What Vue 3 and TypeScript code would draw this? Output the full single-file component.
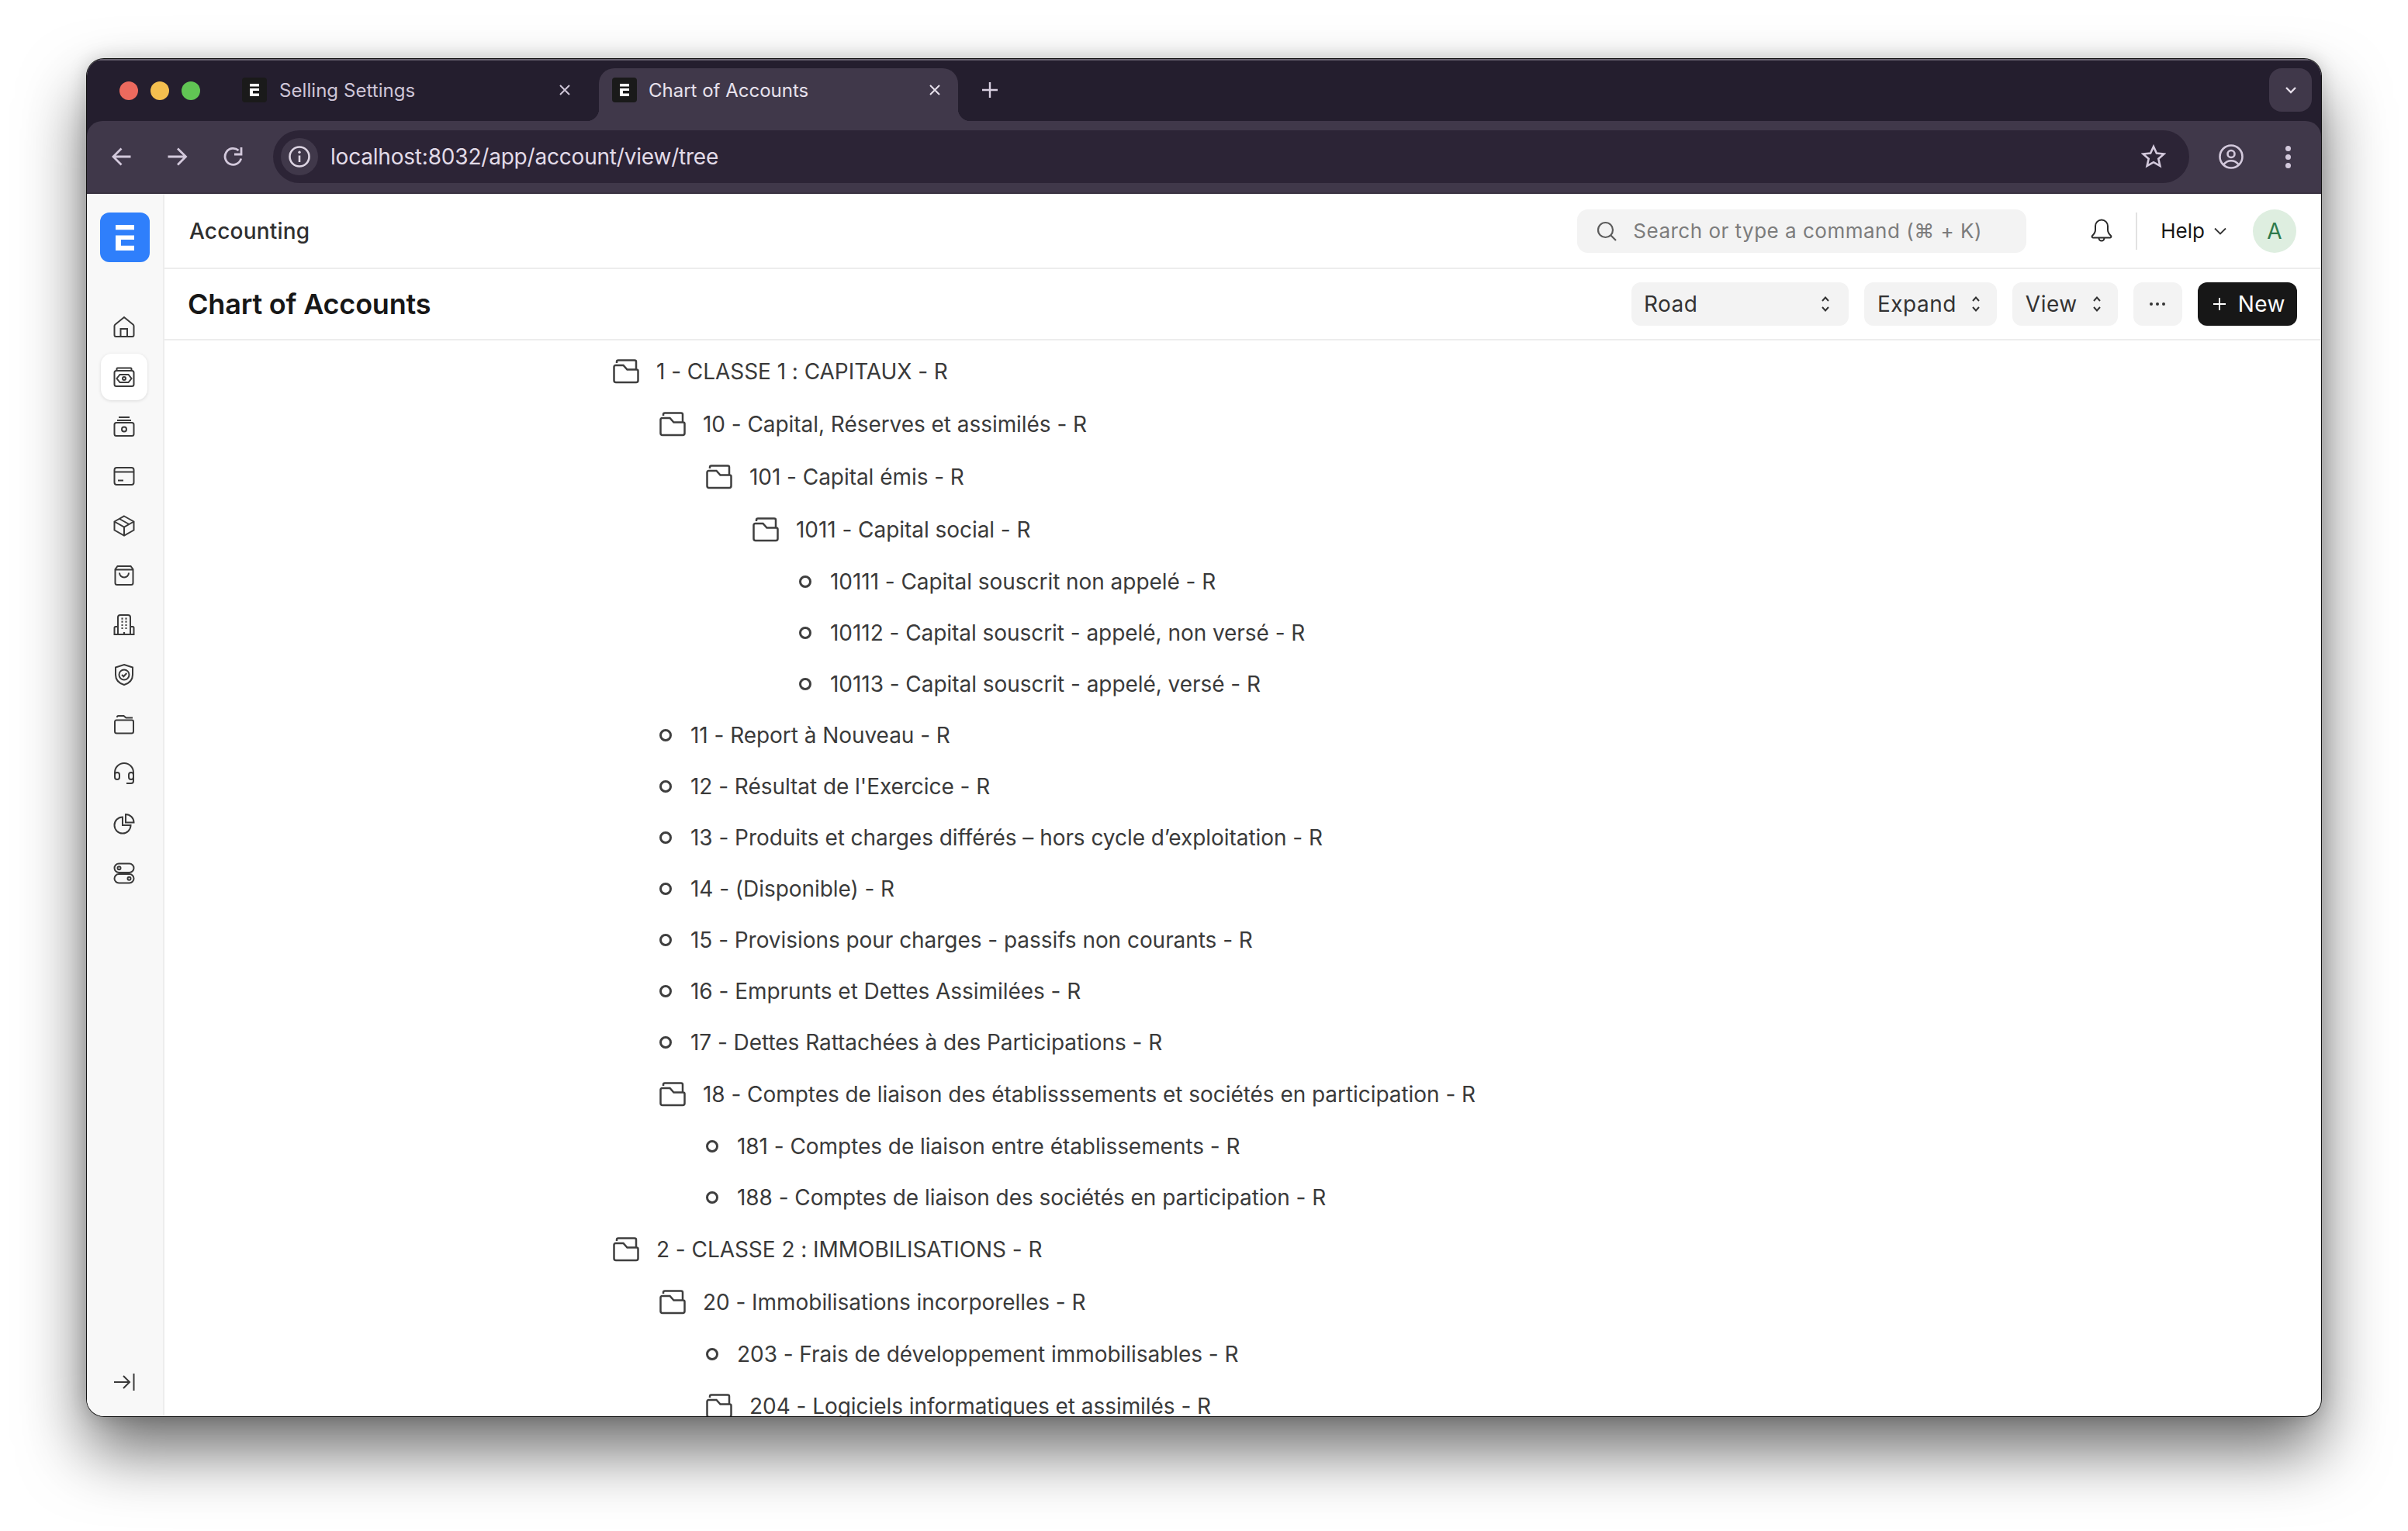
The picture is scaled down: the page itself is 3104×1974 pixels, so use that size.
<script setup lang="ts">
interface Node { level: number; folder: boolean; label: string }
const rows: [number, boolean, string][] = [
  [0, true, '1 - CLASSE 1 : CAPITAUX - R'],
  [1, true, '10 - Capital, Réserves et assimilés - R'],
  [2, true, '101 - Capital émis - R'],
  [3, true, '1011 - Capital social - R'],
  [4, false, '10111 - Capital souscrit non appelé - R'],
  [4, false, '10112 - Capital souscrit - appelé, non versé - R'],
  [4, false, '10113 - Capital souscrit - appelé, versé - R'],
  [1, false, '11 - Report à Nouveau - R'],
  [1, false, "12 - Résultat de l'Exercice - R"],
  [1, false, '13 - Produits et charges différés – hors cycle d’exploitation - R'],
  [1, false, '14 - (Disponible) - R'],
  [1, false, '15 - Provisions pour charges - passifs non courants - R'],
  [1, false, '16 - Emprunts et Dettes Assimilées - R'],
  [1, false, '17 - Dettes Rattachées à des Participations - R'],
  [1, true, '18 - Comptes de liaison des établisssements et sociétés en participation - R'],
  [2, false, '181 - Comptes de liaison entre établissements - R'],
  [2, false, '188 - Comptes de liaison des sociétés en participation - R'],
  [0, true, '2 - CLASSE 2 : IMMOBILISATIONS - R'],
  [1, true, '20 - Immobilisations incorporelles - R'],
  [2, false, '203 - Frais de développement immobilisables - R'],
  [2, true, '204 - Logiciels informatiques et assimilés - R'],
]
const tree: Node[] = rows.map(([level, folder, label]) => ({ level, folder, label }))
const indent = (n: Node) => ({ paddingLeft: `${n.level * 60}px` })
</script>

<template>
  <div class="desk">
    <div class="window">
      <div class="tabstrip">
        <div class="lights"><i class="red"></i><i class="yellow"></i><i class="green"></i></div>
        <div class="tab">
          <span class="favicon"><svg viewBox="0 0 12 16" width="12" height="16"><path d="M0 0h12v3.6H0zM0 6h12v3H4v3.4h8V16H0z" fill="#fff"/></svg></span>
          <span class="tab-title">Selling Settings</span>
          <svg class="tab-x" viewBox="0 0 16 16" width="16" height="16"><path d="M2 2l12 12M14 2L2 14" stroke="currentColor" stroke-width="2" fill="none"/></svg>
        </div>
        <div class="tab active">
          <span class="favicon"><svg viewBox="0 0 12 16" width="12" height="16"><path d="M0 0h12v3.6H0zM0 6h12v3H4v3.4h8V16H0z" fill="#fff"/></svg></span>
          <span class="tab-title">Chart of Accounts</span>
          <svg class="tab-x" viewBox="0 0 16 16" width="16" height="16"><path d="M2 2l12 12M14 2L2 14" stroke="currentColor" stroke-width="2" fill="none"/></svg>
        </div>
        <svg class="tab-plus" viewBox="0 0 22 22" width="22" height="22"><path d="M11 1v20M1 11h20" stroke="#d8cfe0" stroke-width="2.4" fill="none"/></svg>
        <div class="tab-menu"><svg viewBox="0 0 16 10" width="16" height="10"><path d="M2 2l6 6 6-6" stroke="#e6dfea" stroke-width="2.4" fill="none"/></svg></div>
      </div>

      <div class="toolbar">
        <svg class="tb-ico" viewBox="0 0 32 32"><path d="M24.500 16H3M12.500 5.500L2 16l10.500 10.500" /></svg>
        <svg class="tb-ico" viewBox="0 0 32 32"><path d="M0.500 16H22M13 5.500L23.500 16 13 26.500" /></svg>
        <svg class="tb-ico reload" viewBox="0 0 32 32"><path d="M22.700 18.500A10.500 10.500 0 1 1 19.500 8" /><path d="M23 4v9h-9" /></svg>
        <div class="address">
          <span class="info"><svg viewBox="0 0 32 32" width="32" height="32"><circle cx="16" cy="16" r="12.500" fill="none" stroke="#ddd5e3" stroke-width="2.600"/><path d="M16 14.500V23" stroke="#ddd5e3" stroke-width="2.600" fill="none"/><circle cx="16" cy="10.200" r="1.700" fill="#ddd5e3"/></svg></span>
          <span class="url">localhost:8032/app/account/view/tree</span>
          <svg class="tb-ico star" viewBox="0 0 32 32"><path d="M16 3l3.900 8.500 9.600 1-7.200 6.300 2.100 9.200L16 23.200 7.600 28l2.100-9.200-7.200-6.300 9.600-1z" /></svg>
        </div>
        <svg class="tb-ico profile" viewBox="0 0 32 32"><circle cx="16" cy="16" r="14.500" /><circle cx="16" cy="12.500" r="4.500" /><path d="M6.500 26c2.500-3.200 5.800-4.800 9.500-4.800s7 1.600 9.500 4.800" /></svg>
        <span class="kebab"><i></i><i></i><i></i></span>
      </div>

      <div class="app">
        <aside class="sidebar">
          <div class="logo"><svg viewBox="0 0 12 16" width="24" height="33" preserveAspectRatio="none"><path d="M0 0h12v3H0zM0 6.500h12v2.700H3.500v3.800H12v3H0z" fill="#fff"/></svg></div>
          <nav class="side-nav">
            <a class="side-item"><svg viewBox="0 0 32 32"><path d="M3.500 14.500a2.500 2.500 0 0 1 .9-1.900L16 3l11.600 9.600a2.500 2.500 0 0 1 .9 1.900V26a2 2 0 0 1-2 2h-21a2 2 0 0 1-2-2zM11.500 28V18h8.500v10"/></svg></a>
            <a class="side-item current"><svg viewBox="0 0 32 32"><path d="M6.500 8V5.500a1 1 0 0 1 1-1h17a1 1 0 0 1 1 1V8"/><rect x="3.500" y="8" width="25" height="20" rx="2.500"/><path d="M6.500 18l4-5h11l4 5-4 5h-11z"/><circle cx="16" cy="18" r="2"/></svg></a>
            <a class="side-item"><svg viewBox="0 0 32 32"><path d="M9 4h14M7 8h18"/><rect x="3.500" y="11" width="25" height="17" rx="2.500"/><circle cx="16" cy="19.500" r="3"/></svg></a>
            <a class="side-item"><svg viewBox="0 0 32 32"><rect x="3.500" y="5" width="25" height="22" rx="3"/><path d="M3.500 10.500h25M8 21.500h7"/></svg></a>
            <a class="side-item"><svg viewBox="0 0 32 32"><path d="M16 3.500l12.500 7v11L16 28.500l-12.500-7v-11zM3.500 10.500L16 17.500l12.500-7M16 17.500v11M10 7l12.500 7"/></svg></a>
            <a class="side-item"><svg viewBox="0 0 32 32"><path d="M7.500 4h17l3 4v17.500a2.500 2.500 0 0 1-2.500 2.500H7a2.500 2.500 0 0 1-2.500-2.500V8zM4.500 8.500h23M10 12.500a6 6 0 0 0 12 0"/></svg></a>
            <a class="side-item"><svg viewBox="0 0 32 32"><path d="M8 28V6a3 3 0 0 1 3-3h10a3 3 0 0 1 3 3v22M8 18H5a1.500 1.500 0 0 0-1.500 1.500V28h25v-8.500A1.500 1.500 0 0 0 27 18h-3"/><path class="dots" d="M12.500 7.700h2M17.500 7.700h2M12.500 11.700h2M17.500 11.700h2M12.500 16h2M17.500 16h2M12.500 20h2M17.500 20h2M16 25v3"/></svg></a>
            <a class="side-item"><svg viewBox="0 0 32 32"><path d="M16 3l11 3.500V16c0 6.500-4.500 11-11 13C9.500 27 5 22.500 5 16V6.500z"/><circle cx="16" cy="16" r="6.500"/><path d="M13 16l2.300 2.300 4-4.300"/></svg></a>
            <a class="side-item"><svg viewBox="0 0 32 32"><path d="M7 7V6.500A1.500 1.500 0 0 1 8.500 5h7l3 2.500H27"/><path d="M4 12.500a2 2 0 0 1 2-2h20a2 2 0 0 1 2 2V25a2.500 2.500 0 0 1-2.500 2.500h-19A2.500 2.500 0 0 1 4 25z"/></svg></a>
            <a class="side-item"><svg viewBox="0 0 32 32"><path d="M4 17v-3a12 12 0 0 1 24 0v3"/><path d="M4 17a3 3 0 0 1 6 0v3a3 3 0 0 1-6 0zM22 17a3 3 0 0 1 6 0v3a3 3 0 0 1-6 0z"/><path d="M28 20v5a3 3 0 0 1-3 3h-6"/></svg></a>
            <a class="side-item"><svg viewBox="0 0 32 32"><path d="M18 4a10.500 10.500 0 0 1 10.500 10.500H18z"/><path d="M14 7.500a10.500 10.500 0 1 0 10.500 10.500H14z"/></svg></a>
            <a class="side-item"><svg viewBox="0 0 32 32"><rect x="3.500" y="3.500" width="25" height="11.500" rx="5.700"/><rect x="3.500" y="17" width="25" height="11.500" rx="5.700"/><circle cx="9.500" cy="9.200" r="2"/><circle cx="22.500" cy="22.800" r="2"/></svg></a>
          </nav>
          <a class="side-collapse"><svg viewBox="0 0 32 32"><path d="M3 16h19M15 8l8 8-8 8M28.500 5v22"/></svg></a>
        </aside>

        <main class="main">
          <header class="navbar">
            <span class="crumb">Accounting</span>
            <div class="nav-right">
              <div class="search">
                <svg viewBox="0 0 28 28" width="28" height="28"><circle cx="12.500" cy="12.500" r="9.500" fill="none" stroke="#5c5c5c" stroke-width="2.200"/><path d="M19.500 19.500L26 26" stroke="#5c5c5c" stroke-width="2.200" fill="none"/></svg>
                <span>Search or type a command (⌘ + K)</span>
              </div>
              <svg class="bell" viewBox="0 0 28 32" width="28" height="32"><path d="M14 1.500a8 8 0 0 0-8 8v5c0 3-2 5.500-4 7.500a1.500 1.500 0 0 0 1 2.500h22a1.500 1.500 0 0 0 1-2.500c-2-2-4-4.500-4-7.500v-5a8 8 0 0 0-8-8zM10.500 25a3.500 3.500 0 0 0 7 0" fill="none" stroke="#2a2a2a" stroke-width="2"/></svg>
              <span class="vline"></span>
              <span class="help">Help<svg viewBox="0 0 16 10" width="16" height="10"><path d="M1 1.500l7 7 7-7" fill="none" stroke="#333" stroke-width="1.800"/></svg></span>
              <span class="avatar">A</span>
            </div>
          </header>

          <section class="pagehead">
            <h1>Chart of Accounts</h1>
            <div class="actions">
              <button class="btn road"><span>Road</span><svg class="sort" viewBox="0 0 12 24" width="12" height="24"><path d="M2 8l4-4.500L10 8M2 16l4 4.500L10 16"/></svg></button>
              <button class="btn"><span>Expand</span><svg class="sort" viewBox="0 0 12 24" width="12" height="24"><path d="M2 8l4-4.500L10 8M2 16l4 4.500L10 16"/></svg></button>
              <button class="btn"><span>View</span><svg class="sort" viewBox="0 0 12 24" width="12" height="24"><path d="M2 8l4-4.500L10 8M2 16l4 4.500L10 16"/></svg></button>
              <button class="btn more"><svg viewBox="0 0 24 6" width="24" height="6"><circle cx="4" cy="3" r="2" fill="#333"/><circle cx="12" cy="3" r="2" fill="#333"/><circle cx="20" cy="3" r="2" fill="#333"/></svg></button>
              <button class="btn primary"><svg viewBox="0 0 20 20" width="20" height="20"><path d="M10 2v16M2 10h16" stroke="#fff" stroke-width="2" fill="none"/></svg><span>New</span></button>
            </div>
          </section>

          <div class="tree">
            <div v-for="n in tree" :key="n.label" class="row" :class="{ folder: n.folder }" :style="indent(n)">
              <svg v-if="n.folder" class="folder-ico" viewBox="0 0 34 32" width="34" height="32"><path d="M1.500 10a2 2 0 0 1 2-2h10l5 5.500h12a2 2 0 0 1 2 2v12a2.500 2.500 0 0 1-2.500 2.500H4a2.500 2.500 0 0 1-2.500-2.500zM5 5V3.500a2 2 0 0 1 2-2h21a2 2 0 0 1 2 2v10"/></svg>
              <span v-else class="leaf-dot"></span>
              <span class="label">{{ n.label }}</span>
            </div>
          </div>
        </main>
      </div>
    </div>
  </div>
</template>

<style>
html, body { margin: 0; background: #fff; }
</style>

<style scoped>
.desk {
  width: 3104px;
  height: 1974px;
  padding: 76px 0 0 112px;
  box-sizing: border-box;
  overflow: hidden;
  font-family: Inter, "Liberation Sans", sans-serif;
}
.window {
  width: 2880px;
  height: 1750px;
  border-radius: 22px;
  overflow: hidden;
  background: #fff;
  box-shadow: 0 0 0 1px #111, 0 44px 84px rgba(0, 0, 0, .58), 0 0 24px rgba(0,0,0,.18);
  display: flex;
  flex-direction: column;
}
.tabstrip {
  height: 80px;
  flex: none;
  background: #241e2e;
  border-top: 2px solid #67616f;
  box-sizing: border-box;
  display: flex;
  align-items: flex-end;
  padding-left: 42px;
  position: relative;
}
.lights { display: flex; gap: 16px; align-self: flex-start; margin-top: 27px; width: 141px; flex: none; }
.lights i { width: 24px; height: 24px; border-radius: 50%; display: block; }
.red { background: #ec6a5e; }
.yellow { background: #f4bf4f; }
.green { background: #61c554; }
.tab {
  width: 463px;
  height: 68px;
  flex: none;
  box-sizing: border-box;
  padding: 0 22px 12px 17px;
  display: flex;
  align-items: center;
  color: #cfc6d8;
  margin-right: 14px;
  position: relative;
  border-radius: 20px 20px 0 0;
}
.tab.active { background: #40384a; color: #e8e2ed; margin-right: 0; }
.tab.active::before, .tab.active::after {
  content: "";
  position: absolute;
  bottom: 0;
  width: 16px;
  height: 16px;
}
.tab.active::before { left: -16px; background: radial-gradient(circle at 0 0, transparent 16px, #40384a 16.500px); }
.tab.active::after { right: -16px; background: radial-gradient(circle at 100% 0, transparent 16px, #40384a 16.500px); }
.favicon {
  width: 32px; height: 32px; flex: none;
  background: #1a1a1a;
  border-radius: 4px;
  display: flex; align-items: center; justify-content: center;
}
.tab-title { margin-left: 16px; font-size: 24px; letter-spacing: .06px; flex: 1; white-space: nowrap; }
.tab.active .tab-title { margin-left: 15px; letter-spacing: 0; }
.tab-plus { margin: 0 0 29px 30px; flex: none; }
.tab-menu {
  position: absolute;
  right: 12px; top: 10px;
  width: 55px; height: 56px;
  border-radius: 16px;
  background: #40384a;
  display: flex; align-items: center; justify-content: center;
}
.toolbar {
  height: 94px;
  flex: none;
  background: #241e2e;
  box-sizing: border-box;
  display: flex;
  align-items: center;
  position: relative;
  z-index: 0;
  padding: 0 39px 2px 32px;
}
.toolbar::before {
  content: "";
  position: absolute;
  inset: 0;
  background: #40384a;
  border-bottom: 2px solid #393241;
  border-radius: 20px 20px 0 0;
  z-index: -1;
}
.tb-ico { width: 32px; height: 32px; fill: none; stroke: #d3c9dc; stroke-width: 2.800; flex: none; margin-right: 40px; }
.tb-ico.reload { margin-right: 32px; }
.address {
  flex: 1;
  height: 68px;
  margin-right: 38px;
  background: #2c2436;
  border-radius: 34px;
  display: flex;
  align-items: center;
  padding: 0 8px 0 10px;
}
.info {
  width: 48px; height: 48px; border-radius: 50%;
  background: #40384a;
  display: flex; align-items: center; justify-content: center;
  flex: none;
}
.url { margin-left: 16px; font-size: 28px; letter-spacing: -.2px; color: #e2dbe8; flex: 1; }
.tb-ico.star { margin-right: 22px; stroke-width: 2.600; }
.tb-ico.profile { margin-right: 54px; stroke-width: 2.600; }
.kebab { display: flex; flex-direction: column; gap: 4px; width: 7px; flex: none; }
.kebab i { width: 7px; height: 7px; border-radius: 50%; background: #d3c9dc; display: block; }
.app { flex: 1; display: flex; min-height: 0; }
.sidebar {
  width: 100px;
  flex: none;
  box-sizing: border-box;
  background: #f8f8f8;
  border-right: 2px solid #ededed;
  display: flex;
  flex-direction: column;
  align-items: center;
  padding: 24px 2px 0 0;
}
.logo {
  width: 64px; height: 64px;
  border-radius: 12px;
  background: #2f7ffb;
  display: flex; align-items: center; justify-content: center;
  flex: none;
  margin-left: 2px;
}
.side-nav { margin-top: 54px; display: flex; flex-direction: column; gap: 4px; }
.side-item {
  width: 60px; height: 60px;
  border-radius: 14px;
  display: flex; align-items: center; justify-content: center;
}
.side-item.current { background: #fff; box-shadow: 0 1px 4px rgba(0,0,0,.12); }
.side-item svg, .side-collapse svg { width: 32px; height: 32px; fill: none; stroke: #3a3a3a; stroke-width: 2; }
.side-item .dots { stroke-width: 2.200; }
.side-collapse { margin-top: auto; margin-bottom: 28px; display: flex; }
.main { flex: 1; min-width: 0; display: flex; flex-direction: column; }
.navbar {
  height: 97px;
  flex: none;
  box-sizing: border-box;
  border-bottom: 2px solid #ededed;
  display: flex;
  align-items: center;
  justify-content: space-between;
  padding: 0 32px 0 32px;
}
.crumb { font-size: 28px; font-weight: 500; letter-spacing: .2px; color: #2f2f2f; }
.nav-right { display: flex; align-items: center; }
.search {
  width: 579px; height: 56px;
  border-radius: 14px;
  background: #f3f3f3;
  box-sizing: border-box;
  padding-left: 24px;
  display: flex; align-items: center; gap: 20px;
  color: #7c7c7c;
  font-size: 26px;
  letter-spacing: .5px;
}
.bell { margin-left: 83px; }
.vline { width: 2px; height: 48px; background: #e2e2e2; margin-left: 30px; }
.help { margin-left: 30px; font-size: 26px; color: #171717; display: flex; align-items: center; gap: 12px; }
.avatar {
  margin-left: 34px;
  width: 56px; height: 56px; border-radius: 50%;
  background: #deeee0; color: #2f7a4b;
  font-size: 28px;
  display: flex; align-items: center; justify-content: center;
}
.pagehead {
  height: 92px;
  flex: none;
  box-sizing: border-box;
  border-bottom: 2px solid #ededed;
  display: flex;
  align-items: center;
  justify-content: space-between;
  padding: 0 31px 0 30px;
}
h1 { margin: 0; font-size: 36px; font-weight: 600; letter-spacing: -.2px; color: #171717; }
.actions { display: flex; gap: 20px; }
.btn {
  height: 56px;
  border: 0;
  border-radius: 12px;
  background: #f3f3f3;
  padding: 0 21px 0 17px;
  font: 400 28px Inter, "Liberation Sans", sans-serif;
  letter-spacing: .5px;
  color: #333;
  display: flex; align-items: center; gap: 19px;
}
.btn.road { width: 280px; justify-content: space-between; padding: 0 24px 0 16px; }
.btn.more { width: 63px; justify-content: center; padding: 0; }
.btn.primary { background: #171717; color: #fff; gap: 14px; padding: 0 15px 0 18px; }
.sort { fill: none; stroke: #333; stroke-width: 2; }
.tree {
  flex: 1;
  min-height: 0;
  overflow: hidden;
  padding: 6px 0 0 578px;
}
.row {
  height: 66px;
  display: flex;
  align-items: center;
  color: #3a3a3a;
  font-size: 28px;
  letter-spacing: -.05px;
  white-space: nowrap;
}
.row.folder { height: 68px; }
.folder-ico { fill: none; stroke: #3f3f3f; stroke-width: 2.500; flex: none; margin-right: 22px; }
.leaf-dot {
  width: 16px; height: 16px;
  box-sizing: border-box;
  border: 3.500px solid #3f3f3f;
  border-radius: 50%;
  flex: none;
  margin-right: 24px;
}
</style>
